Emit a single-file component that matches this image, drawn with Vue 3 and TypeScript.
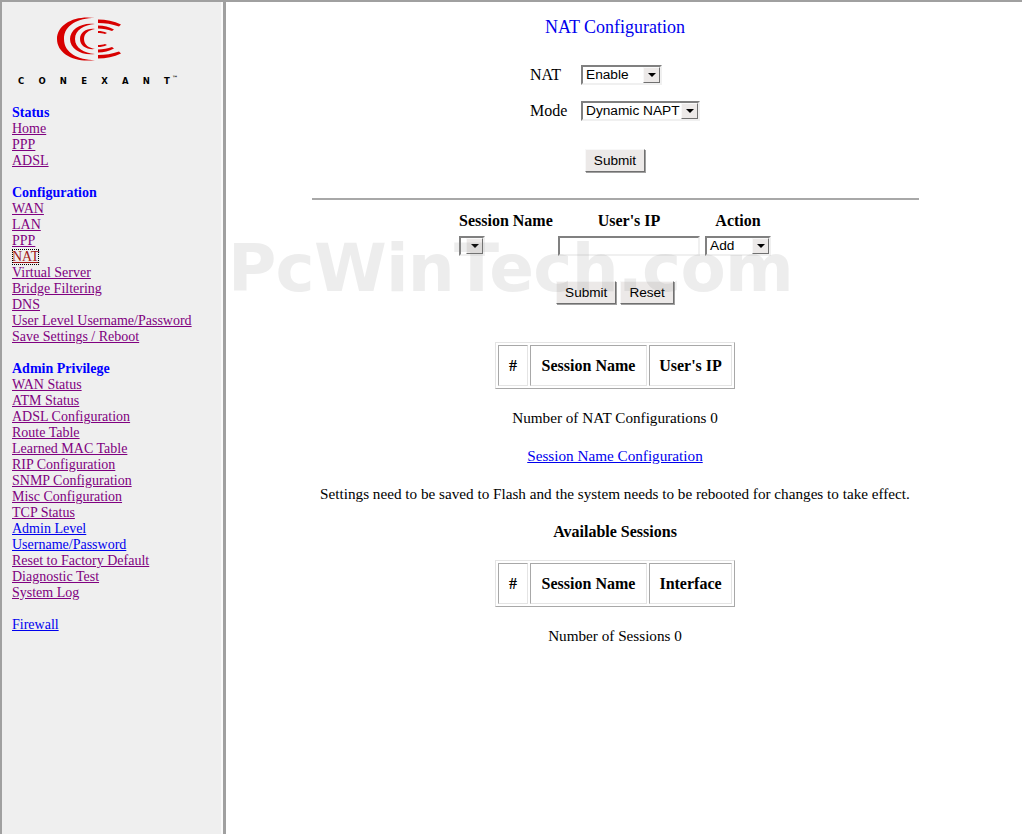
<script setup lang="ts">
// NAT configuration page of the router admin UI, sidebar plus centred form.
interface LinkGroup {
  title?: string
  links: string[]
}

const groups: LinkGroup[] = [
  { title: 'Status', links: ['Home', 'PPP', 'ADSL'] },
  {
    title: 'Configuration',
    links: ['WAN', 'LAN', 'PPP', 'NAT', 'Virtual Server', 'Bridge Filtering', 'DNS', 'User Level Username/Password', 'Save Settings / Reboot'],
  },
  {
    title: 'Admin Privilege',
    links: ['WAN Status', 'ATM Status', 'ADSL Configuration', 'Route Table', 'Learned MAC Table', 'RIP Configuration', 'SNMP Configuration', 'Misc Configuration', 'TCP Status', 'Admin Level', 'Username/Password', 'Reset to Factory Default', 'Diagnostic Test', 'System Log'],
  },
  { links: ['Firewall'] },
]

// links the browser has not visited yet stay blue
const unvisited = ['Admin Level', 'Username/Password', 'Firewall']
const focused = 'NAT'
</script>

<template>
  <div class="page">
    <aside class="side">
      <div class="logo">
        <svg width="80" height="55" viewBox="50 12 80 55" class="mark">
          <g fill="#d80000">
            <path d="M95 18C75 15 57 24 57 39C57 54 75 63 95 60C78 60 64 53 64 39C64 25 78 18 95 18Z" />
            <path d="M95 24C82 22 70 29 70 39C70 49 82 56 95 54C84 53 75 48 75 39C75 30 84 25 95 24Z" />
            <path d="M95 29C87 28 80 32 80 39C80 46 87 50 95 49C89 48 84 45 84 39C84 33 89 30 95 29Z" />
            <path d="M98 19.5C106 19.5 114 21 121 24.5L119 26.5C112 24 105 23 98 23Z" />
            <path d="M98 25.5C104 25.5 109 27 114 29.5L112 31C108 29.5 103 28.5 98 28.5Z" />
            <path d="M98 31C101 31 104 31.5 107 33L105 34C103 33.3 100 33 98 33Z" />
            <path d="M98 58.5C106 58.5 114 57 121 53.5L119 51.5C112 54 105 55 98 55Z" />
            <path d="M98 52.5C104 52.5 109 51 114 48.5L112 47C108 48.5 103 49.5 98 49.5Z" />
            <path d="M98 47C101 47 104 46.5 107 45L105 44C103 44.7 100 45 98 45Z" />
          </g>
        </svg>
        <div class="brand">CONEXANT<sup>™</sup></div>
      </div>
      <section v-for="(g, i) in groups" :key="i" class="group">
        <h3 v-if="g.title">{{ g.title }}</h3>
        <a
          v-for="l in g.links"
          :key="l"
          href="#"
          :class="{ fresh: unvisited.includes(l), focus: g.title === 'Configuration' && l === focused }"
        >{{ l }}</a>
      </section>
    </aside>

    <main class="main">
      <h1>NAT Configuration</h1>

      <div class="pair">
        <label>NAT</label>
        <div class="select w-enable"><span>Enable</span><i class="arrow"></i></div>
      </div>
      <div class="pair mode">
        <label>Mode</label>
        <div class="select w-mode"><span>Dynamic NAPT</span><i class="arrow"></i></div>
      </div>
      <button class="btn first">Submit</button>

      <hr />

      <div class="sessions">
        <b>Session Name</b>
        <b class="ip-head">User's IP</b>
        <b>Action</b>
        <div class="select w-empty"><span></span><i class="arrow"></i></div>
        <div class="input"></div>
        <div class="select w-add"><span>Add</span><i class="arrow"></i></div>
      </div>
      <div class="btns">
        <button class="btn">Submit</button>
        <button class="btn">Reset</button>
      </div>

      <table class="grid nat">
        <tbody>
          <tr><th class="num">#</th><th class="name">Session Name</th><th class="ip">User's IP</th></tr>
        </tbody>
      </table>
      <p class="line">Number of NAT Configurations 0</p>
      <p class="line"><a href="#" class="fresh">Session Name Configuration</a></p>
      <p class="line">Settings need to be saved to Flash and the system needs to be rebooted for changes to take effect.</p>
      <p class="line strong"><b>Available Sessions</b></p>
      <table class="grid avail">
        <tbody>
          <tr><th class="num">#</th><th class="name">Session Name</th><th class="iface">Interface</th></tr>
        </tbody>
      </table>
      <p class="line">Number of Sessions 0</p>

      <div class="mark-text">PcWinTech.com</div>
    </main>
  </div>
</template>

<style>
html,
body {
  margin: 0;
  background: #fff;
}
</style>

<style scoped>
.page {
  display: flex;
  box-sizing: border-box;
  height: 834px;
  overflow: hidden;
  border-top: 2px solid #a0a0a0;
  border-left: 2px solid #a0a0a0;
  font: 16px/18px "Liberation Serif", "Times New Roman", serif;
  color: #000;
}
.side {
  box-sizing: border-box;
  width: 224px;
  flex: none;
  background: #efefef;
  border-right: 3px solid #a0a0a0;
  box-shadow: inset -2px 0 0 #fafafa;
  padding-left: 10px;
  font-size: 14px;
  line-height: 16px;
}
.logo {
  height: 103px;
}
.mark {
  display: block;
  margin-left: 38px;
  padding-top: 10px;
}
.brand {
  margin: 8px 0 0 6px;
  font: bold 8.5px/12px "DejaVu Sans", Verdana, sans-serif;
  letter-spacing: 14.2px;
  white-space: nowrap;
}
.brand sup {
  font-size: 6px;
  letter-spacing: 0;
  line-height: 0;
  margin-left: -12px;
}
.group {
  margin-bottom: 16px;
}
.group h3 {
  margin: 0;
  font-size: 14px;
  line-height: 16px;
  font-weight: bold;
  color: #0000ff;
}
.group a {
  display: table;
  color: #800080;
}
.group a.fresh,
.line a.fresh {
  color: #0000ee;
}
.group a.focus {
  color: #a01818;
  outline: 1px dotted #000;
  outline-offset: -1px;
}
.main {
  position: relative;
  flex: none;
  width: 778px;
  display: flex;
  flex-direction: column;
  align-items: center;
}
.mark-text {
  position: absolute;
  left: 2px;
  top: 229px;
  font: bold 66px/76px "DejaVu Sans", Verdana, sans-serif;
  letter-spacing: -0.8px;
  color: rgba(130, 130, 130, 0.14);
  white-space: nowrap;
  pointer-events: none;
}
h1 {
  margin: 15px 0 0;
  font-size: 18px;
  line-height: 20px;
  font-weight: normal;
  color: #0000ee;
}
.pair {
  display: flex;
  align-items: center;
  width: 170px;
  margin-top: 28px;
}
.pair.mode {
  margin-top: 16px;
}
.pair label {
  width: 51px;
}
.select {
  box-sizing: border-box;
  display: flex;
  align-items: center;
  justify-content: space-between;
  height: 20px;
  padding-left: 3px;
  background: #fff;
  border: 2px solid;
  border-color: #808080 #f0f0f0 #f0f0f0 #808080;
  font: 13.7px/18px "Liberation Sans", Arial, sans-serif;
  white-space: nowrap;
}
.arrow {
  position: relative;
  flex: none;
  width: 17px;
  height: 16px;
  background: #ece9e8;
  border: 1px solid;
  border-color: #f8f8f8 #707070 #707070 #f8f8f8;
  box-sizing: border-box;
}
.arrow::after {
  content: "";
  position: absolute;
  left: 4px;
  top: 5px;
  border: 4px solid transparent;
  border-top-color: #000;
  border-bottom: 0;
}
.w-enable {
  width: 81px;
}
.w-mode {
  width: 119px;
}
.w-empty {
  width: 26px;
}
.w-add {
  width: 66px;
}
.btn {
  box-sizing: border-box;
  height: 23px;
  padding: 0 8px;
  background: #ece9e8;
  border: 1px solid;
  border-color: #f8f8f8 #707070 #707070 #f8f8f8;
  box-shadow: 1px 1px 0 #a0a0a0;
  font: 13.6px/16px "Liberation Sans", Arial, sans-serif;
  color: #000;
}
.btn.first {
  margin-top: 28px;
}
hr {
  box-sizing: border-box;
  width: 607px;
  height: 2px;
  margin: 26px 0 0;
  border: 0;
  background: #a8a8a8;
}
.sessions {
  display: grid;
  grid-template-columns: 99px 147px 66px;
  width: 312px;
  margin-top: 12px;
  justify-items: center;
}
.sessions b {
  height: 18px;
  white-space: nowrap;
}
.sessions b:first-child {
  justify-self: start;
}
.sessions .ip-head {
  justify-self: start;
  width: 142px;
  text-align: center;
}
.sessions .select {
  margin-top: 6px;
}
.sessions .w-empty {
  justify-self: start;
}
.input {
  box-sizing: border-box;
  justify-self: start;
  width: 142px;
  height: 20px;
  margin-top: 6px;
  background: #fff;
  border: 2px solid;
  border-color: #808080 #f0f0f0 #f0f0f0 #808080;
}
.btns {
  display: flex;
  gap: 4px;
  margin-top: 25px;
}
.grid {
  margin-top: 38px;
  border-collapse: separate;
  border-spacing: 2px;
  border: 1px solid;
  border-color: #e4e4e4 #a8a8a8 #a8a8a8 #e4e4e4;
  background: #fff;
}
.grid th {
  box-sizing: border-box;
  height: 41px;
  padding: 0;
  border: 1px solid;
  border-color: #a8a8a8 #e4e4e4 #e4e4e4 #a8a8a8;
  font-size: 16px;
  white-space: nowrap;
}
.grid .num {
  width: 30px;
}
.grid .name {
  width: 117px;
}
.grid .ip {
  width: 83px;
}
.grid .iface {
  width: 83px;
}
.line {
  margin: 20px 0 0;
  font-size: 15.2px;
}
.line.strong {
  font-size: 16px;
}
.avail {
  margin-top: 19px;
}
</style>
